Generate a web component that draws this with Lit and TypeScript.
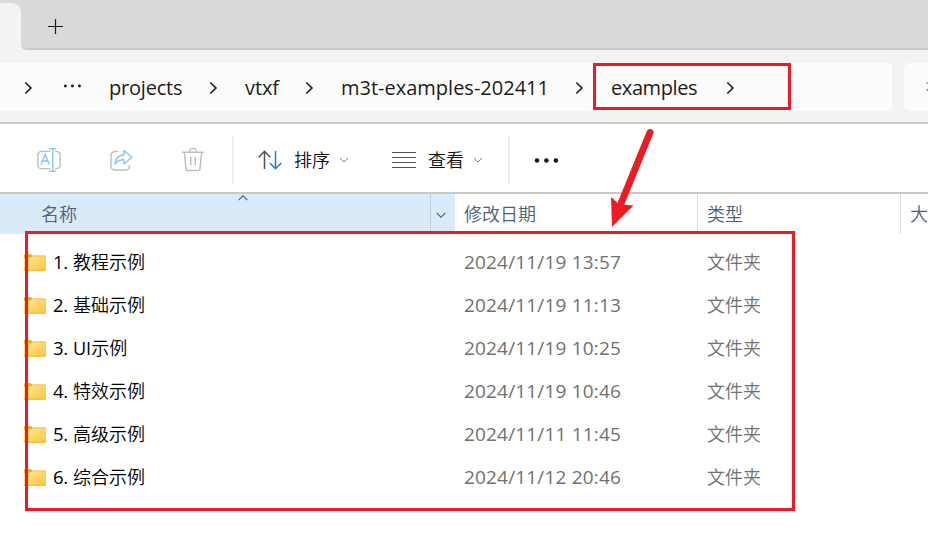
import { LitElement, html, css, svg } from "lit";
import { customElement } from "lit/decorators.js";

interface Crumb { label: string; cls: string; }
interface FileRow { prefix: string; latin?: string; name: string; date: string; }

const CRUMBS: Crumb[] = [
  { label: "projects", cls: "c-projects" },
  { label: "vtxf", cls: "c-vtxf" },
  { label: "m3t-examples-202411", cls: "c-m3t" },
  { label: "examples", cls: "c-examples" },
];

const ROWS: FileRow[] = [
  { prefix: "1.", name: "教程示例", date: "2024/11/19 13:57" },
  { prefix: "2.", name: "基础示例", date: "2024/11/19 11:13" },
  { prefix: "3.", latin: "UI", name: "示例", date: "2024/11/19 10:25" },
  { prefix: "4.", name: "特效示例", date: "2024/11/19 10:46" },
  { prefix: "5.", name: "高级示例", date: "2024/11/11 11:45" },
  { prefix: "6.", name: "综合示例", date: "2024/11/12 20:46" },
];

const chevron = html`<svg class="chev" width="12" height="16" viewBox="0 0 12 16">
  <path d="M3.300 2.500 8.900 8 3.300 13.500" fill="none" stroke="#222" stroke-width="1.7" /></svg>`;

const caret = (cls: string) => html`<svg class=${cls} width="12" height="8" viewBox="0 0 12 8">
  <path d="M1.6 1.8 6 6.2 10.4 1.8" fill="none" stroke="currentColor" stroke-width="1.1" /></svg>`;

const smallCaret = html`<svg class="small" width="12" height="8" viewBox="0 0 12 8">
  <path d="M2 2.2 6 6 10 2.2" fill="none" stroke="currentColor" stroke-width="1" /></svg>`;

const dot = (x: number, y: number, r: number) => svg`<circle cx=${x} cy=${y} r=${r} fill="#1b1b1b" />`;

@customElement("app-root")
export class AppRoot extends LitElement {
  static styles = css`
    :host {
      display: block;
      position: relative;
      width: 928px;
      height: 539px;
      overflow: hidden;
      background: #fff;
      color: #1b1b1b;
      font-family: "Open Sans", "Noto Sans CJK SC", sans-serif;
    }
    * { box-sizing: border-box; }
    svg { display: block; flex: none; }
    .tabs { display: flex; height: 50px; background: #f3f3f3; }
    .tab { width: 21px; background: #d9d9d9; }
    .tab::before {
      content: ""; display: block; height: 47px; margin-top: 3px;
      background: #f3f3f3; border-top-right-radius: 9px;
    }
    .strip {
      flex: 1; height: 50px; background: #d9d9d9; padding: 18px 0 0 25px;
      border-bottom: 2px solid #cbcbcb; border-bottom-left-radius: 6px;
    }
    .address {
      display: flex; gap: 12px; height: 74px; padding-top: 13px;
      background: #f3f3f3; border-bottom: 2px solid #c8c8c8;
    }
    .path {
      display: flex; align-items: center; width: 892px; height: 48px; padding: 2px 0 0 22px;
      background: #fcfcfc; border-radius: 0 5px 5px 0; flex: none;
    }
    .more { margin: -5px 0 0 29px; }
    .crumb { display: flex; align-items: center; font-size: 20px; line-height: 30px; white-space: nowrap; flex: none; }
    .label { flex: none; }
    .c-projects { margin-left: 26px; width: 136px; }
    .c-projects .label { width: 98px; letter-spacing: -0.2px; }
    .c-vtxf { width: 96px; }
    .c-vtxf .label { width: 58px; letter-spacing: -0.1px; }
    .c-m3t { width: 270px; }
    .c-m3t .label { width: 232px; }
    .c-examples .label { width: 113px; letter-spacing: -0.4px; }
    .search {
      flex: 1; height: 48px; background: #fcfcfc; border-radius: 6px 0 0 6px;
      display: flex; justify-content: flex-end; align-items: center; overflow: hidden;
    }
    .tools {
      display: flex; align-items: center; height: 70px; padding: 3px 0 0 36px;
      border-bottom: 2px solid #c8c8c8; font-size: 18px; color: #111;
    }
    .i-share, .i-trash { margin-left: 46px; }
    .sep { width: 2px; height: 48px; background: #ececec; flex: none; }
    .s1 { margin-left: 26px; }
    .s2 { margin-left: 24px; }
    .sort { margin-left: 24px; }
    .view { margin-left: 42px; }
    .tool { display: flex; align-items: center; line-height: 26px; white-space: nowrap; }
    .t-label { margin-left: 12px; }
    .small { margin-left: 8px; color: #777; }
    .ellipsis { margin-left: 23px; }
    .head {
      display: grid; grid-template-columns: 455px 243px 203px 27px; height: 40px;
      font-size: 18px; color: #4c607a; line-height: 41px; white-space: nowrap; overflow: hidden;
    }
    .h-name { display: flex; background: #d9eaf8; padding-left: 41px; }
    .h-name-text { width: 196px; }
    .up { transform: rotate(180deg); }
    .drop { margin-left: auto; width: 25px; border-left: 1px solid #bfd0de; display: flex; align-items: center; padding-left: 4px; }
    .h-cell { padding-left: 9px; border-right: 1px solid #dedede; }
    .h-last { border-right: 0; }
    .rows { padding-top: 7px; }
    .row {
      display: grid; grid-template-columns: 24px 29px 20px 391px 243px 1fr; height: 43px;
      align-items: center; font-size: 18px; line-height: 43px; color: #707070; white-space: nowrap;
    }
    .folder { grid-column: 2; margin-top: -1px; }
    .num, .name { color: #000; }
    .num { font-size: 18.5px; letter-spacing: -0.3px; line-height: 41px; height: 43px; }
    .cjk { font-weight: 350; }
    .latin { font-weight: 400; }
    .date { font-size: 19px; letter-spacing: 0.17px; }
    .mark { position: absolute; border: 3px solid #ed1c24; }
    .m-path { left: 593px; top: 63px; width: 198px; height: 47px; }
    .m-list { left: 25px; top: 231px; width: 770px; height: 280px; }
    .arrow { position: absolute; left: 600px; top: 120px; }
  `;

  render() {
    return html`
      <div class="tabs">
        <div class="tab"></div>
        <div class="strip">
          <svg width="18" height="18" viewBox="0 0 18 18">
            <path d="M9.5 1v15M2 8.5h15" stroke="#1b1b1b" stroke-width="1.2" fill="none" />
          </svg>
        </div>
      </div>
      <div class="address">
        <div class="path">
          ${chevron}
          <svg class="more" width="20" height="6" viewBox="0 0 20 6">${dot(2.4, 3, 1.45)}${dot(9.4, 3, 1.45)}${dot(16.4, 3, 1.45)}</svg>
          ${CRUMBS.map(c => html`<div class="crumb ${c.cls}"><span class="label">${c.label}</span>${chevron}</div>`)}
        </div>
        <div class="search">
          <svg width="3" height="16" viewBox="0 0 3 16"><path d="M1 4h2M1.6 12l1.4-2" stroke="#777" stroke-width="1.2" /></svg>
        </div>
      </div>
      <div class="tools">
        <svg width="26" height="26" viewBox="0 0 26 26" fill="none" stroke-width="1.4">
          <path d="M14.5 4.4H5.4A3.6 3.6 0 0 0 1.8 8v10a3.6 3.6 0 0 0 3.6 3.6h9.1M19 4.4h1.400A3.800 3.800 0 0 1 24.200 8.200v9.600a3.800 3.800 0 0 1-3.800 3.800H19" stroke="#bfbfbf" />
          <path d="M5 17.5 9.2 7.5l4.2 10M6.5 14h5.4M13.2 1.8h7M13.2 24.2h7M16.8 1.8v22.4" stroke="#8fc3ec" />
        </svg>
        <svg class="i-share" width="26" height="26" viewBox="0 0 26 26" fill="none" stroke-width="1.4" stroke-linejoin="round">
          <path d="M10.5 4.5H7a4 4 0 0 0-4 4v10.8a3.7 3.7 0 0 0 3.7 3.7h11A3.7 3.7 0 0 0 21.4 19.3V18" stroke="#bfbfbf" />
          <path d="M16 3.5 24 10.2 16 17v-4.2c-3.8-.2-6.5 1-9 4.2.5-5.500 3.500-9 9-9.300z" stroke="#8fc3ec" />
        </svg>
        <svg class="i-trash" width="26" height="26" viewBox="0 0 26 26" fill="none" stroke="#bfbfbf" stroke-width="1.5">
          <path d="M2.2 5.2h21.6M9.5 5a3.5 3.500 0 0 1 7 0M4.300 5.200 6 21.700a2 2 0 0 0 2 1.900h10a2 2 0 0 0 2-1.900L21.700 5.200M10.700 10v8M15.300 10v8" />
        </svg>
        <div class="sep s1"></div>
        <div class="tool sort">
          <svg width="24" height="22" viewBox="0 0 24 22" fill="none" stroke-width="1.5">
            <path d="M6.5 20V2.5M.8 8.2 6.5 2.3 12.3 8.2" stroke="#505050" />
            <path d="M17.5 2V19.7M11.8 14l5.7 5.7L23.3 14" stroke="#1a7fd4" />
          </svg>
          <span class="t-label cjk">排序</span>${smallCaret}
        </div>
        <div class="tool view">
          <svg width="24" height="18" viewBox="0 0 24 18"><path d="M0 1.5h24M0 6.5h24M0 11.5h24M0 16.5h24" stroke="#555" stroke-width="1.2" /></svg>
          <span class="t-label cjk">查看</span>${smallCaret}
        </div>
        <div class="sep s2"></div>
        <svg class="ellipsis" width="28" height="8" viewBox="0 0 28 8">${dot(4, 4.5, 2.3)}${dot(13.4, 4.5, 2.3)}${dot(22.9, 4.5, 2.3)}</svg>
      </div>
      <div class="head cjk">
        <div class="h-name">
          <span class="h-name-text">名称</span>${caret("up")}
          <div class="drop">${caret("down")}</div>
        </div>
        <div class="h-cell">修改日期</div>
        <div class="h-cell">类型</div>
        <div class="h-cell h-last">大</div>
      </div>
      <div class="rows">
        ${ROWS.map(r => html`<div class="row">
          <svg class="folder" width="22" height="17" viewBox="0 0 22 17">
            <defs><linearGradient id="f" x1="0" y1="0" x2="1" y2="1">
              <stop offset="0" stop-color="#ffe796" /><stop offset="1" stop-color="#fcc63d" />
            </linearGradient></defs>
            <path d="M0 16.5V1Q0 0 1 0H6.5L8.5 1.500H21q1 0 1 1V8H0z" fill="#edae1b" />
            <path d="M0 4.5Q0 3.5 1 3.5H6.5L8.5 2.200H21q1 0 1 1V15.5q0 1-1 1H0z" fill="url(#f)" />
            <path d="M0 16.2H21.5" stroke="#eeb02d" />
          </svg>
          <span class="num">${r.prefix}</span>
          <span class="name cjk">${r.latin ? html`<span class="latin">${r.latin}</span>` : ""}${r.name}</span>
          <span class="date">${r.date}</span>
          <span class="cjk">文件夹</span>
        </div>`)}
      </div>
      <div class="mark m-path"></div>
      <div class="mark m-list"></div>
      <svg class="arrow" width="60" height="110" viewBox="600 120 60 110">
        <path d="M650 132.5 620 206" stroke="#ed1c24" stroke-width="7" stroke-linecap="round" />
        <path d="M612 227 611 197 619.5 204.5 633.5 205.5z" fill="#ed1c24" />
      </svg>
    `;
  }
}
